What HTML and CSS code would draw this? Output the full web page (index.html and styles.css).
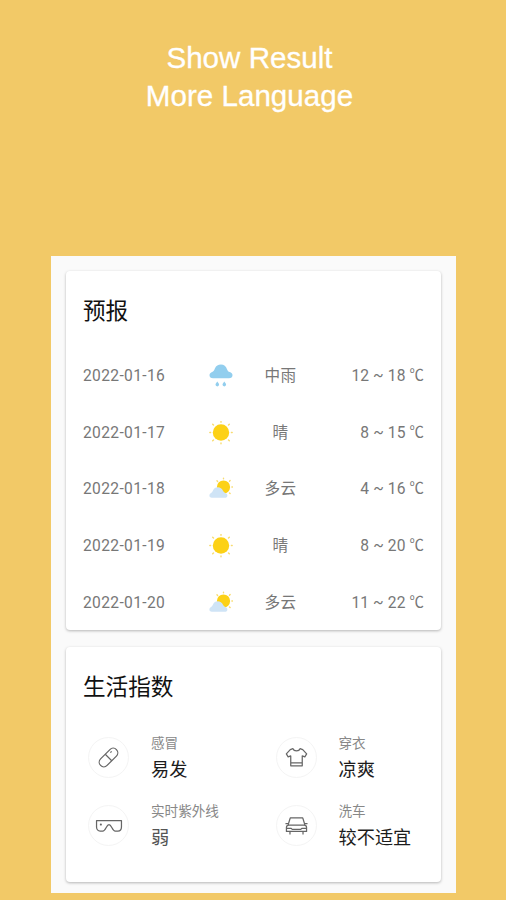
FILE: index.html
```
<!DOCTYPE html>
<html lang="zh-CN">
<head>
  <meta charset="utf-8">
  <title>Weather</title>
  <link rel="stylesheet" href="styles.css">
</head>
<body>
  <svg class="sprite" width="0" height="0">
    <symbol id="rain" viewBox="0 0 24 24">
      <path fill="#92ceee" d="M4 14.200C1.800 14.200.5 12.900.5 11.200c0-1.600 1.200-2.500 2.700-3.200C5 7.200 5.200 5.800 6 4.200 7.100 1.900 9.200.6 11.900.6c3.100 0 5.200 1.700 6.100 4.600.6 1.700 1.200 2.300 2.700 2.900 1.700.6 2.800 1.600 2.800 3.100 0 1.800-1.300 3-3.500 3z"/>
      <path fill="#92ceee" d="M8.300 17.500c1 1.400 1.800 2.100 1.800 3.100a1.800 1.800 0 0 1-3.600 0c0-1 .8-1.700 1.800-3.100zM15.300 17.500c1 1.400 1.800 2.100 1.800 3.100a1.800 1.800 0 0 1-3.600 0c0-1 .8-1.700 1.800-3.100z"/>
    </symbol>
    <symbol id="sun" viewBox="0 0 24 24">
      <circle cx="12" cy="11.500" r="8.200" fill="#fcd116"/>
      <path stroke="#f8dc70" stroke-width="1.400" stroke-linecap="round" d="M12 .5v.8M12 21.900v.8M.8 11.500h.8M22.400 11.500h.8M3.700 3.200l.8.800M19.500 19l.8.8M3.700 19.800l.8-.8M19.500 4l.8-.8"/>
    </symbol>
    <symbol id="cloudy" viewBox="0 0 24 24">
      <circle cx="14.500" cy="10" r="6.600" fill="#fcd116"/>
      <path stroke="#f8dc70" stroke-width="1.400" stroke-linecap="round" d="M14.500 1.200v.6M22.900 10h.6M8 3.800l.6.6M20.500 4.200l.6-.6M20.500 16l.6.6"/>
      <path fill="#cfe4f6" d="M2.800 20.700C1.200 20.700.4 19.800.4 18.500c0-1.300.9-2 2-2.700 1.200-.8 1.300-1.900 2.100-3.200 1-1.600 2.500-2.400 4.300-2.400 2.400 0 4.200 1.400 5.200 3.500.6 1.200 1.200 1.600 2.300 2.200 1.300.7 2.100 1.300 2.100 2.500 0 1.400-1 2.300-2.700 2.300z"/>
    </symbol>
  </svg>

  <h1 class="headline">Show Result<br>More Language</h1>

  <div class="screen">
    <div class="card forecast">
      <h2>预报</h2>
      <div class="day">
        <span>2022-01-16</span>
        <svg class="weather"><use href="#rain"/></svg>
        <span class="condition">中雨</span>
        <span class="temp">12 ~ 18 <i>℃</i></span>
      </div>
      <div class="day">
        <span>2022-01-17</span>
        <svg class="weather"><use href="#sun"/></svg>
        <span class="condition">晴</span>
        <span class="temp">8 ~ 15 <i>℃</i></span>
      </div>
      <div class="day">
        <span>2022-01-18</span>
        <svg class="weather"><use href="#cloudy"/></svg>
        <span class="condition">多云</span>
        <span class="temp">4 ~ 16 <i>℃</i></span>
      </div>
      <div class="day">
        <span>2022-01-19</span>
        <svg class="weather"><use href="#sun"/></svg>
        <span class="condition">晴</span>
        <span class="temp">8 ~ 20 <i>℃</i></span>
      </div>
      <div class="day">
        <span>2022-01-20</span>
        <svg class="weather"><use href="#cloudy"/></svg>
        <span class="condition">多云</span>
        <span class="temp">11 ~ 22 <i>℃</i></span>
      </div>
    </div>

    <div class="card life">
      <h2>生活指数</h2>
      <div class="grid">
        <div class="item">
          <div class="circle">
            <svg viewBox="0 0 24 24"><g transform="rotate(-45 12 12)"><rect x=".3" y="7.200" width="23.400" height="9.600" rx="4.800"/><path d="M12 7.200v9.600M17 9.800h1.800"/></g></svg>
          </div>
          <div><div class="label">感冒</div><div class="value">易发</div></div>
        </div>
        <div class="item">
          <div class="circle">
            <svg viewBox="0 0 24 24"><path d="M8.300 2.800 5.500 3.800 1.400 8.200 3.300 11.300 6 10.300V20.700H18V10.300L20.700 11.300 22.600 8.200 18.500 3.800 15.700 2.800C14.700 5.700 9.300 5.700 8.300 2.800ZM6 17.500H18"/></svg>
          </div>
          <div><div class="label">穿衣</div><div class="value">凉爽</div></div>
        </div>
        <div class="item">
          <div class="circle">
            <svg class="goggles" viewBox="0 0 28 24"><path d="M1 6.800H27V13.500C27 16 25.500 17.800 23.200 17.800H20.500C17.500 17.800 16.700 11 14 11S10.500 17.800 7.500 17.800H4.800C2.500 17.800 1 16 1 13.500ZM4.500 11h2M5.500 10v2"/></svg>
          </div>
          <div><div class="label">实时紫外线</div><div class="value weak">弱</div></div>
        </div>
        <div class="item">
          <div class="circle">
            <svg viewBox="0 0 24 24"><path d="M3.200 11.500 5.500 4H18.500L20.800 11.500M.5 10H3.500M20.500 10H23.500M4 11.500H20C21.500 11.500 22.500 12.600 22.500 14V18.200H1.500V14C1.500 12.600 2.500 11.500 4 11.500ZM5.200 18.200V21.500M18.800 18.200V21.500M1.500 15H6.500L7.500 16H16.500L17.500 15H22.500"/></svg>
          </div>
          <div><div class="label">洗车</div><div class="value">较不适宜</div></div>
        </div>
      </div>
    </div>
  </div>
</body>
</html>
```

FILE: styles.css
```
* {
  box-sizing: border-box;
}
body {
  margin: 0;
  height: 900px;
  overflow: hidden;
  background-color: #f2c967;
  font-family: Roboto, "Noto Sans CJK SC", sans-serif;
}
.sprite {
  display: block;
}
.headline {
  margin: 0;
  padding: 39px 7px 0 0;
  height: 256px;
  font-family: "Liberation Sans", Arial, sans-serif;
  font-size: 29.6px;
  font-weight: normal;
  line-height: 38px;
  text-align: center;
  color: #fff;
  -webkit-text-stroke: 0.3px #fff;
}
.screen {
  width: 405px;
  height: 637px;
  margin-left: 51px;
  padding: 15px;
  background-color: #fafafa;
}
.card {
  padding: 0 17px;
  background-color: #fff;
  border-radius: 4px;
  box-shadow: 0 1px 3px rgba(0, 0, 0, 0.28);
}
.forecast {
  height: 359px;
  margin-bottom: 17px;
}
.life {
  height: 235px;
}
h2 {
  margin: 0;
  padding-top: 26px;
  font-size: 22.6px;
  font-weight: normal;
  line-height: 30px;
  color: #111;
}
.forecast h2 {
  height: 77px;
}
.life h2 {
  height: 76px;
}
.day {
  display: grid;
  grid-template-columns: 126px 25px 69px 1fr;
  align-items: center;
  height: 56.6px;
  font-size: 15.6px;
  line-height: 20px;
  letter-spacing: 0.35px;
  color: #777;
}
.weather {
  width: 24px;
  height: 24px;
}
.condition {
  padding-left: 24px;
  text-align: center;
  white-space: nowrap;
}
.temp {
  text-align: right;
  letter-spacing: 0.1px;
}
.temp i {
  font-family: "Noto Sans CJK SC", sans-serif;
  font-style: normal;
  font-size: 14.4px;
  line-height: 1;
  vertical-align: 1px;
}
.grid {
  display: grid;
  grid-template-columns: 187.5px 1fr;
  grid-auto-rows: 68px;
}
.item {
  display: flex;
  padding-left: 5px;
}
.circle {
  display: flex;
  align-items: center;
  justify-content: center;
  width: 41px;
  height: 41px;
  margin: 14px 22px 0 0;
  border: 1px solid #f4f4f4;
  border-radius: 50%;
}
.circle svg {
  width: 23px;
  height: 23px;
  fill: none;
  stroke: #666;
  stroke-width: 1.3;
  stroke-linejoin: round;
}
.circle .goggles {
  width: 28px;
}
.label {
  padding-top: 10px;
  font-size: 13.6px;
  line-height: 20px;
  color: #888;
}
.value {
  padding-top: 4px;
  font-size: 18.2px;
  line-height: 26px;
  color: #1c1c1c;
}
.weak {
  color: #555;
}
```
